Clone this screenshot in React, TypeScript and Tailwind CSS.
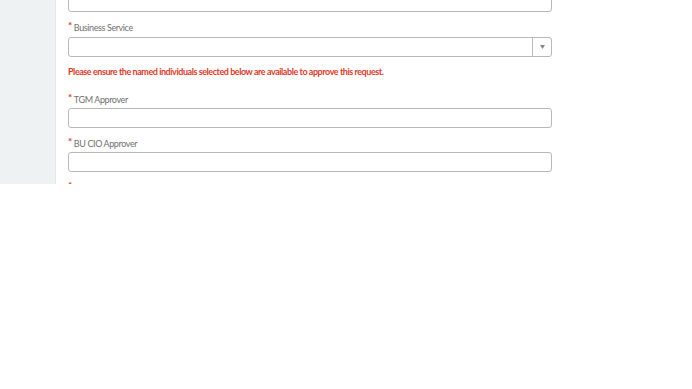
import React from "react";

const Label: React.FC<{ text: string }> = ({ text }) => (
    <div className="shrink-0 flex flex-row items-start h-[14px] leading-[14px] text-[9px] tracking-[-0.4px] text-[#707070]">
        <span className="text-[#e0392b] text-[10px] font-bold leading-[10px] mr-[2px]">*</span>
        <span className="mt-[1px]">{text}</span>
    </div>
);

const TextInput: React.FC = () => (
    <div className="shrink-0 h-[20px] w-[484px] border border-[#b8b8b8] rounded-[3px] bg-white"></div>
);

const SelectInput: React.FC = () => (
    <div className="shrink-0 h-[20px] w-[484px] border border-[#b8b8b8] rounded-[3px] bg-white flex flex-row">
        <div className="flex-1"></div>
        <div className="w-[19px] border-l border-[#b8b8b8] flex items-center justify-center">
            <svg width="5" height="4" viewBox="0 0 5 4">
                <path d="M0 0 L5 0 L2.5 4 Z" fill="#888888" />
            </svg>
        </div>
    </div>
);

export default function App() {
    return (
        <div className="w-full h-[389px] bg-white" style={{ fontFamily: 'Lato, "Open Sans", sans-serif' }}>
            <div className="flex flex-row h-[184px] overflow-hidden">
                <div className="w-[56px] shrink-0 bg-[#eef2f2] border-r border-[#e4e8e8]"></div>
                <div className="flex flex-col pl-[12px] -mt-[8px]">
                    <TextInput />
                    <div className="shrink-0 mt-[8px]">
                        <Label text="Business Service" />
                    </div>
                    <div className="shrink-0 mt-[3px]">
                        <SelectInput />
                    </div>
                    <p className="shrink-0 mt-[8px] h-[14px] leading-[14px] text-[9px] tracking-[-0.45px] font-bold text-[#e0392b]">
                        Please ensure the named individuals selected below are available to approve this request.
                    </p>
                    <div className="shrink-0 mt-[13px]">
                        <Label text="TGM Approver" />
                    </div>
                    <div className="shrink-0 mt-[2px]">
                        <TextInput />
                    </div>
                    <div className="shrink-0 mt-[8px]">
                        <Label text="BU CIO Approver" />
                    </div>
                    <div className="shrink-0 mt-[2px]">
                        <TextInput />
                    </div>
                    <div className="shrink-0 mt-[8px]">
                        <Label text="" />
                    </div>
                </div>
            </div>
        </div>
    );
}
